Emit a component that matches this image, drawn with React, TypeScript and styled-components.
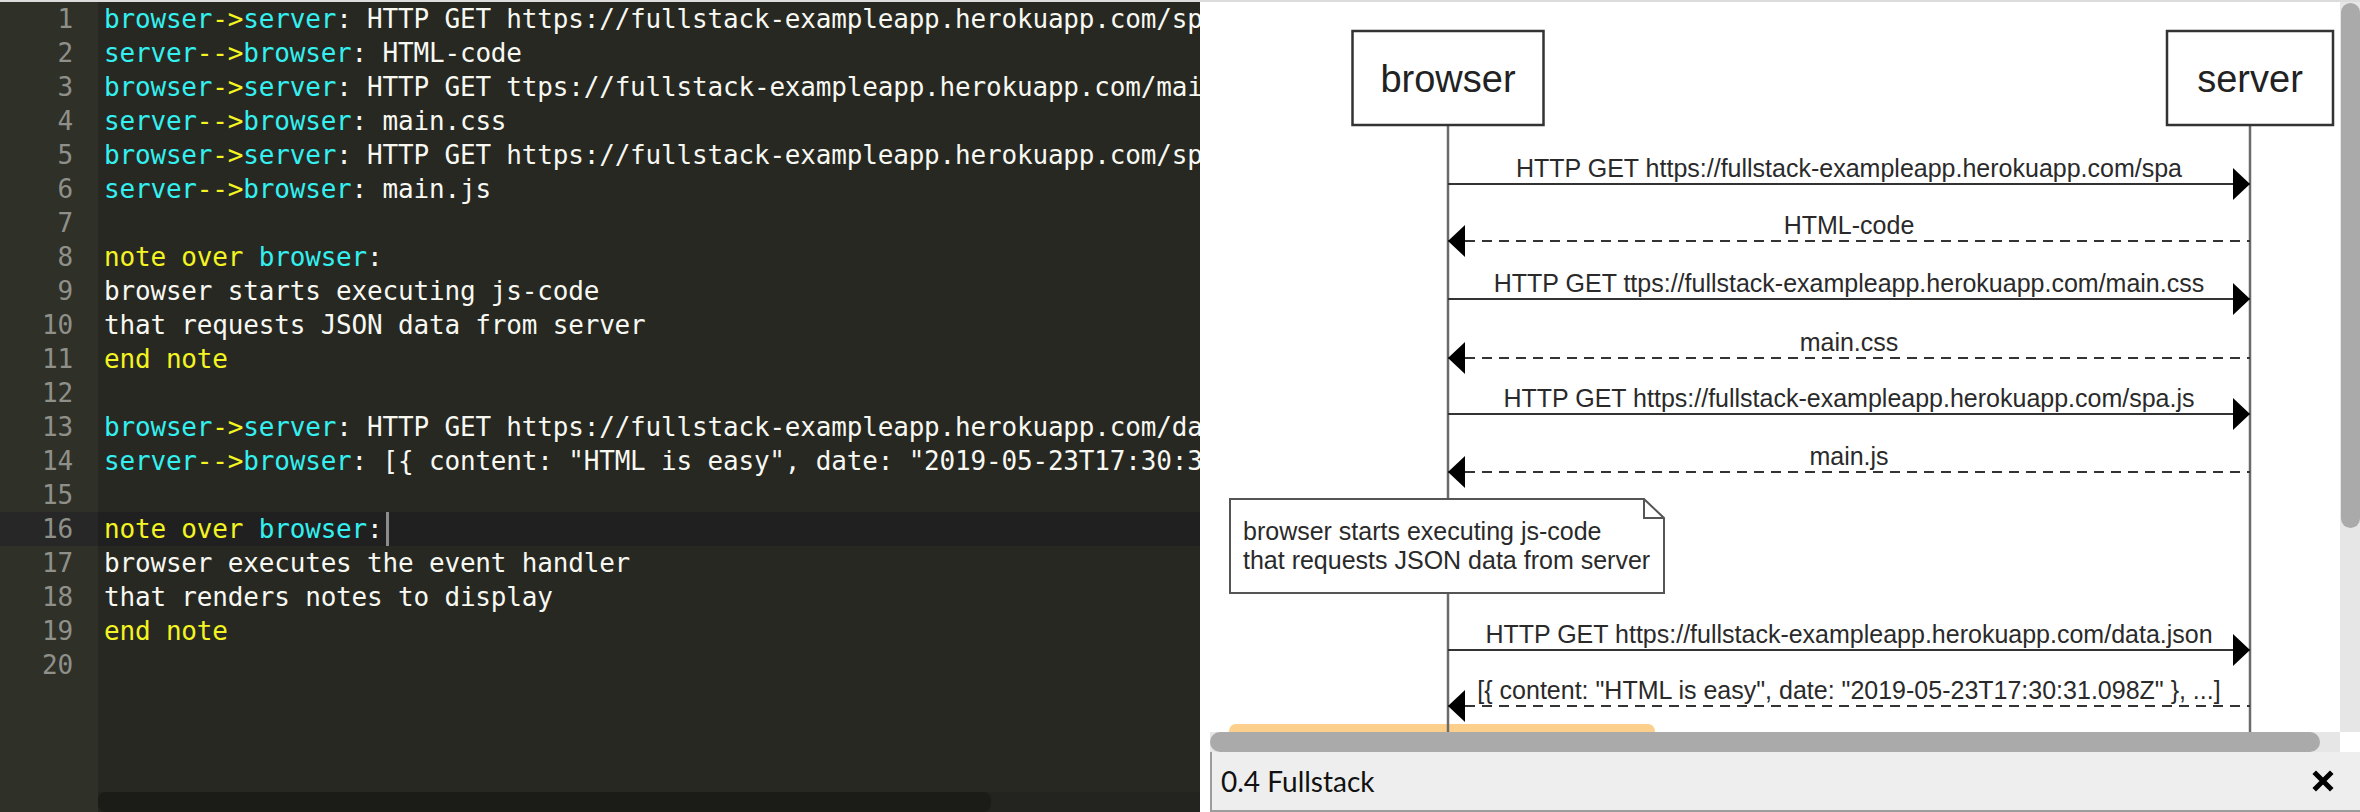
import React from 'react';
import styled, { createGlobalStyle } from 'styled-components';

const GlobalStyle = createGlobalStyle`
  html, body {
    margin: 0;
    padding: 0;
  }

  body {
    width: 2360px;
    height: 812px;
    overflow: hidden;
    background: #fff;
  }
`;

type TokenKind = 'plain' | 'actor' | 'keyword';
type Token = [TokenKind, string];

const message = (from: string, arrow: string, to: string, rest: string): Token[] => [
  ['actor', from],
  ['keyword', arrow],
  ['actor', to],
  ['plain', ':' + rest],
];

const noteOver = (actor: string): Token[] => [
  ['keyword', 'note over '],
  ['actor', actor],
  ['plain', ':'],
];

const endNote: Token[] = [['keyword', 'end note']];
const text = (value: string): Token[] => [['plain', value]];

const source: Token[][] = [
  message('browser', '->', 'server', ' HTTP GET https://fullstack-exampleapp.herokuapp.com/spa'),
  message('server', '-->', 'browser', ' HTML-code'),
  message('browser', '->', 'server', ' HTTP GET ttps://fullstack-exampleapp.herokuapp.com/main.css'),
  message('server', '-->', 'browser', ' main.css'),
  message('browser', '->', 'server', ' HTTP GET https://fullstack-exampleapp.herokuapp.com/spa.js'),
  message('server', '-->', 'browser', ' main.js'),
  [],
  noteOver('browser'),
  text('browser starts executing js-code'),
  text('that requests JSON data from server'),
  endNote,
  [],
  message('browser', '->', 'server', ' HTTP GET https://fullstack-exampleapp.herokuapp.com/data.json'),
  message(
    'server',
    '-->',
    'browser',
    ' [{ content: "HTML is easy", date: "2019-05-23T17:30:31.098Z" }, ...]',
  ),
  [],
  noteOver('browser'),
  text('browser executes the event handler'),
  text('that renders notes to display'),
  endNote,
  [],
];

const ACTIVE_LINE = 15;

const Page = styled.div`
  display: flex;
  flex-direction: column;
  width: 2360px;
  height: 812px;
`;

const TopStrip = styled.div`
  flex: none;
  height: 2px;
  background: #dcdcdc;
`;

const Workspace = styled.div`
  flex: 1;
  display: flex;
  min-height: 0;
`;

/* ---------- editor ---------- */

const Editor = styled.div`
  flex: none;
  width: 1200px;
  display: grid;
  grid-template-columns: 98px 1fr;
  grid-template-rows: 1fr 20px;
  overflow: hidden;
  background: #272822;
  font-family: 'DejaVu Sans Mono', monospace;
  font-size: 26px;
  letter-spacing: -0.18px;
`;

const Gutter = styled.div`
  grid-row: 1 / 3;
  grid-column: 1;
  background: #2f3129;
  color: #8f908a;
`;

const GutterCell = styled.div<{ $active?: boolean }>`
  height: 34px;
  line-height: 34px;
  padding-right: 25px;
  text-align: right;
  background: ${(p) => (p.$active ? '#272727' : 'transparent')};
`;

const Code = styled.div`
  grid-row: 1;
  grid-column: 2;
  overflow: hidden;
  color: #f8f8f2;
`;

const CodeLine = styled.div<{ $active?: boolean }>`
  height: 34px;
  line-height: 34px;
  padding-left: 6px;
  white-space: pre;
  background: ${(p) => (p.$active ? '#202020' : 'transparent')};
`;

const Tok = styled.span<{ $kind: TokenKind }>`
  color: ${(p) =>
    p.$kind === 'actor' ? '#34f0f0' : p.$kind === 'keyword' ? '#f4f422' : '#f8f8f2'};
`;

const Cursor = styled.span`
  display: inline-block;
  width: 3px;
  height: 34px;
  margin-left: 3px;
  vertical-align: top;
  background: #8c8c8c;
`;

const EditorScroll = styled.div`
  grid-row: 2;
  grid-column: 2;
  background: #23241f;
`;

const EditorThumb = styled.div`
  width: 893px;
  height: 100%;
  border-radius: 8px;
  background: #1b1c17;
`;

/* ---------- preview ---------- */

const Splitter = styled.div`
  flex: none;
  width: 10px;
  background: #fff;
`;

const Preview = styled.div`
  flex: 1;
  display: flex;
  flex-direction: column;
  min-width: 0;
`;

const Viewport = styled.div`
  flex: 1;
  display: grid;
  grid-template-columns: 1fr 20px;
  grid-template-rows: 1fr 20px;
  min-height: 0;
`;

const Canvas = styled.div`
  overflow: hidden;
  background: #fff;

  svg {
    display: block;
  }
`;

const VTrack = styled.div`
  background: #e6e6e6;
  padding: 1px 0 0 1px;
`;

const VThumb = styled.div`
  width: 19px;
  height: 525px;
  border-radius: 10px;
  background: #aaaaaa;
`;

const HTrack = styled.div`
  background: #e6e6e6;
`;

const HThumb = styled.div`
  width: 1110px;
  height: 20px;
  border-radius: 10px;
  background: #aaaaaa;
`;

const Corner = styled.div`
  background: #fff;
`;

const Footer = styled.div`
  flex: none;
  height: 58px;
  display: flex;
  align-items: center;
  justify-content: space-between;
  padding: 0 26px 0 9px;
  background: #eeeeee;
  border-left: 2px solid #9c9c9c;
  border-bottom: 2px solid #9c9c9c;
  font-family: Lato, 'Open Sans', sans-serif;
  font-size: 28px;
  color: #111;
`;

const CloseButton = styled.button`
  display: flex;
  padding: 0;
  border: 0;
  background: none;
  cursor: pointer;
`;

/* ---------- diagram ---------- */

const BROWSER_X = 1448;
const SERVER_X = 2250;
const MID_X = (BROWSER_X + SERVER_X) / 2;

interface Message {
  y: number;
  label: string;
  reply?: boolean;
}

const messages: Message[] = [
  { y: 184, label: 'HTTP GET https://fullstack-exampleapp.herokuapp.com/spa' },
  { y: 241, label: 'HTML-code', reply: true },
  { y: 299, label: 'HTTP GET ttps://fullstack-exampleapp.herokuapp.com/main.css' },
  { y: 358, label: 'main.css', reply: true },
  { y: 414, label: 'HTTP GET https://fullstack-exampleapp.herokuapp.com/spa.js' },
  { y: 472, label: 'main.js', reply: true },
  { y: 650, label: 'HTTP GET https://fullstack-exampleapp.herokuapp.com/data.json' },
  {
    y: 706,
    label: '[{ content: "HTML is easy", date: "2019-05-23T17:30:31.098Z" }, ...]',
    reply: true,
  },
];

const Actor = ({ x, width, name }: { x: number; width: number; name: string }) => (
  <g>
    <rect x={x - width / 2} y={31} width={width} height={94} fill="#fff" stroke="#333" strokeWidth={2.5} />
    <text x={x} y={92} textAnchor="middle" fontSize={38} fill="#222">
      {name}
    </text>
  </g>
);

const Arrow = ({ y, label, reply }: Message) => {
  const tip = reply ? BROWSER_X : SERVER_X;
  const base = reply ? BROWSER_X + 17 : SERVER_X - 17;
  return (
    <g>
      <text x={MID_X} y={y - 7} textAnchor="middle" fontSize={25} fill="#2a2a2a">
        {label}
      </text>
      <line
        x1={BROWSER_X}
        x2={SERVER_X}
        y1={y}
        y2={y}
        stroke="#333"
        strokeWidth={2}
        strokeDasharray={reply ? '10 7' : undefined}
      />
      <polygon points={`${tip},${y} ${base},${y - 16} ${base},${y + 16}`} fill="#000" />
    </g>
  );
};

const Note = ({ lines }: { lines: string[] }) => (
  <g>
    <path d="M1230 499 H1644 L1664 518 V593 H1230 Z" fill="#fff" stroke="#555" strokeWidth={2} />
    <path d="M1644 499 V518 H1664" fill="none" stroke="#555" strokeWidth={2} />
    {lines.map((line, i) => (
      <text key={line} x={1243} y={540 + i * 29} fontSize={25} fill="#2a2a2a">
        {line}
      </text>
    ))}
  </g>
);

const SequenceDiagram = () => (
  <svg width={1130} height={730} viewBox="1210 2 1130 730" fontFamily="'Liberation Sans', Arial, sans-serif">
    <rect x={1229} y={724} width={426} height={20} rx={7} fill="#fcd08c" />
    <line x1={BROWSER_X} x2={BROWSER_X} y1={125} y2={740} stroke="#6b6b6b" strokeWidth={2.5} />
    <line x1={SERVER_X} x2={SERVER_X} y1={125} y2={740} stroke="#6b6b6b" strokeWidth={2.5} />
    <Actor x={BROWSER_X} width={191} name="browser" />
    <Actor x={SERVER_X} width={166} name="server" />
    {messages.map((m) => (
      <Arrow key={m.y} {...m} />
    ))}
    <Note lines={['browser starts executing js-code', 'that requests JSON data from server']} />
  </svg>
);

const CloseIcon = () => (
  <svg width={22} height={22} viewBox="0 0 22 22">
    <path d="M4 4 L18 18 M18 4 L4 18" stroke="#000" strokeWidth={5} strokeLinecap="square" />
  </svg>
);

const App: React.FC = () => (
  <>
    <GlobalStyle />
    <Page>
      <TopStrip />
      <Workspace>
        <Editor>
          <Gutter>
            {source.map((_, i) => (
              <GutterCell key={i} $active={i === ACTIVE_LINE}>
                {i + 1}
              </GutterCell>
            ))}
          </Gutter>
          <Code>
            {source.map((tokens, i) => (
              <CodeLine key={i} $active={i === ACTIVE_LINE}>
                {tokens.map(([kind, value], j) => (
                  <Tok key={j} $kind={kind}>
                    {value}
                  </Tok>
                ))}
                {i === ACTIVE_LINE && <Cursor />}
              </CodeLine>
            ))}
          </Code>
          <EditorScroll>
            <EditorThumb />
          </EditorScroll>
        </Editor>
        <Splitter />
        <Preview>
          <Viewport>
            <Canvas>
              <SequenceDiagram />
            </Canvas>
            <VTrack>
              <VThumb />
            </VTrack>
            <HTrack>
              <HThumb />
            </HTrack>
            <Corner />
          </Viewport>
          <Footer>
            <span>0.4 Fullstack</span>
            <CloseButton aria-label="Close">
              <CloseIcon />
            </CloseButton>
          </Footer>
        </Preview>
      </Workspace>
    </Page>
  </>
);

export default App;
